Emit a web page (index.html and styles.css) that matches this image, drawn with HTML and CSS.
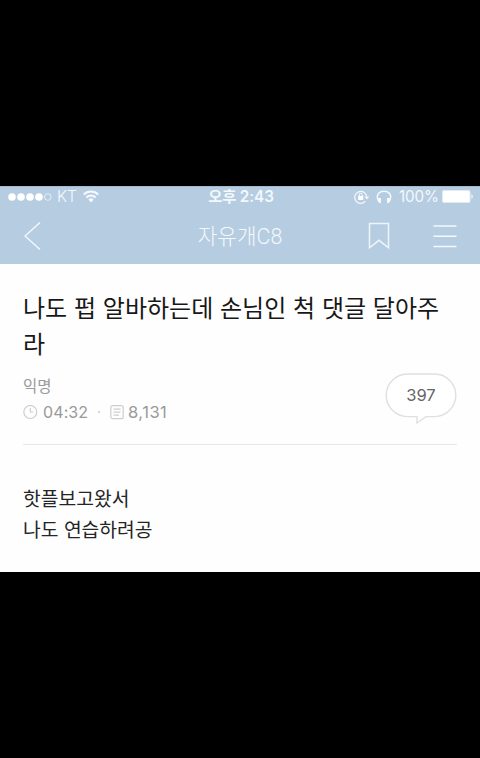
FILE: index.html
```
<!DOCTYPE html>
<html lang="ko">
<head>
<meta charset="utf-8">
<title>자유개C8</title>
<link rel="stylesheet" href="styles.css">
</head>
<body>
<main class="screen">
  <header class="top">
    <div class="status">
      <div class="status-left">
        <svg class="signal" width="44" height="10" viewBox="0 0 44 10"><g fill="#fff"><circle cx="4" cy="5" r="3.8"/><circle cx="13" cy="5" r="3.8"/><circle cx="22" cy="5" r="3.8"/><circle cx="31" cy="5" r="3.8"/></g><circle cx="39.8" cy="5" r="3.3" fill="none" stroke="#e6eff7" stroke-width="1"/></svg>
        <span class="carrier">KT</span>
        <svg class="wifi" width="16" height="13" viewBox="0 0 16 13"><g fill="none" stroke="#f6faff" stroke-width="2"><path d="M.8 4.600a10.200 10.200 0 0 1 14.400 0"/><path d="M3.400 7.500a6.500 6.500 0 0 1 9.200 0"/></g><path d="M5.400 9.600a3.700 3.700 0 0 1 5.200 0L8 12.400z" fill="#f6faff"/></svg>
      </div>
      <span class="time">오후 2:43</span>
      <div class="status-right">
        <svg width="16" height="14" viewBox="0 0 16 14"><path d="M11.4 11.2A6 6 0 1 1 12.7 6.8" fill="none" stroke="#f3f8fd" stroke-width="1.2"/><path d="M10.3 6.5h5l-2.5 3z" fill="#f3f8fd"/><rect x="4.2" y="6" width="5" height="4" fill="#fff"/><path d="M5.2 6V4.8a1.5 1.5 0 0 1 3 0V6" fill="none" stroke="#fff"/></svg>
        <svg class="phones" width="16" height="14" viewBox="0 0 16 14"><path d="M3.3 12C-.8 6.5 2 1.2 8 1.2s8.800 5.300 4.700 10.800" fill="none" stroke="#f6faff" stroke-width="1.4"/><path d="M2.300 8h2.500v5H3.300zM13.700 8h-2.500v5h1.500z" fill="#fff"/></svg>
        <span class="percent">100%</span>
        <svg class="battery" width="32" height="13" viewBox="0 0 32 13"><rect x=".5" y=".5" width="27.500" height="12" rx="1.500" fill="#fff" stroke="#e0ebf5"/><path d="M29.500 4q2.500 2.500 0 5z" fill="#fff"/></svg>
      </div>
    </div>
    <nav class="nav">
      <svg class="back" width="18" height="30" viewBox="0 0 18 30"><path d="M16 1.500L1 15l15 13.500" fill="none" stroke="#f3f8fd" stroke-width="1.500"/></svg>
      <h2 class="board">자유개C8</h2>
      <svg class="bookmark" width="22" height="28" viewBox="0 0 22 28"><path d="M1.500 1.500h19v24.300L11 18.300l-9.500 7.500z" fill="none" stroke="#edf5fc" stroke-width="1.500"/></svg>
      <svg class="menu" width="24" height="24" viewBox="0 0 24 24"><path d="M.5 2h23M.5 12.300h23M.5 22.500h23" stroke="#f3f8fd" stroke-width="1.500"/></svg>
    </nav>
  </header>
  <article class="post">
    <h1 class="title">나도 펍 알바하는데 손님인 척 댓글 달아주<br>라</h1>
    <div class="info">
      <div>
        <div class="author">익명</div>
        <div class="meta">
          <svg width="15" height="15" viewBox="0 0 15 15"><g fill="none" stroke="#cecece" stroke-width="1.200"><circle cx="7.300" cy="7" r="6.500"/><path d="M7.300 3v4h3"/></g></svg>
          <span class="clock">04:32</span>
          <span class="dot"></span>
          <svg width="14" height="15" viewBox="0 0 14 15"><g fill="none" stroke="#cecece" stroke-width="1.200"><rect x=".8" y=".7" width="12.400" height="13" rx="2"/><path d="M3.500 4.200h7M3.500 7.200h7M3.500 10.200h5.500"/></g></svg>
          <span class="views">8,131</span>
        </div>
      </div>
      <div class="comments">
        <svg class="bubble" width="72" height="52" viewBox="0 0 72 52"><path d="M22.500 1h27a21.300 21.300 0 0 1 0 42.600H41L32 50v-6.400h-9.500a21.300 21.300 0 0 1 0-42.600z" fill="#fff" stroke="#e0e0e0" stroke-width="1.400"/></svg>
        <span class="count">397</span>
      </div>
    </div>
    <p class="body">핫플보고왔서<br>나도 연습하려공</p>
  </article>
</main>
</body>
</html>
```
FILE: styles.css
```
* { box-sizing: border-box; }
body {
  margin: 0;
  padding-top: 186px;
  height: 758px;
  background: #000;
  font-family: Inter, "Noto Sans CJK KR", sans-serif;
  overflow: hidden;
}
svg { display: block; flex: none; }
.screen { height: 386px; background: #fefefe; }
.top {
  height: 78px;
  background: #b6cce1;
  border-top: 1px solid #a5b9cf;
  color: #f3f8fd;
}
.status {
  display: grid;
  grid-template-columns: 1fr auto 1fr;
  align-items: center;
  height: 18px;
  padding: 0 6px 0 8px;
  line-height: 18px;
}
.status-left, .status-right { display: flex; align-items: center; }
.status-right { justify-content: flex-end; }
.carrier { margin-left: 5px; width: 21px; font-size: 15.5px; font-weight: 300; }
.wifi { margin-left: 5px; }
.time { padding-top: 1px; font-size: 15.3px; font-weight: 600; letter-spacing: -.1px; }
.phones { margin-left: 6px; }
.percent { margin-left: 7px; width: 39px; padding-top: 1px; font-size: 15.2px; letter-spacing: -.1px; }
.battery { margin-left: 4px; }
.nav {
  display: grid;
  grid-template-columns: 120px 1fr 69px 51px;
  align-items: center;
  height: 59px;
}
.back { margin-left: 24px; margin-top: 3px; }
.board {
  margin: 4px 0 0;
  text-align: center;
  font-family: Roboto, "Noto Sans CJK KR", sans-serif;
  font-size: 21.3px;
  line-height: 28px;
  font-weight: 300;
}
.bookmark { margin-left: 8px; margin-top: 3px; }
.menu { margin-left: 4px; margin-top: 2px; }
.post { padding: 25px 23px 0; }
.title {
  margin: 0;
  font-family: "Noto Sans CJK KR", sans-serif;
  font-size: 24px;
  line-height: 36px;
  font-weight: 400;
  letter-spacing: .02px;
  white-space: nowrap;
  color: #171717;
}
.info {
  display: flex;
  justify-content: space-between;
  height: 84px;
  padding-top: 12px;
  border-bottom: 1px solid #e8e8e8;
}
.author { height: 26px; font-size: 15.5px; line-height: 28px; color: #999; }
.meta { display: flex; align-items: center; height: 26px; color: #999; font-size: 16px; }
.clock { margin-left: 5px; width: 46px; letter-spacing: .1px; }
.dot { width: 2px; height: 2px; margin: 0 10px 0 9px; border-radius: 50%; background: #c8c8c8; }
.views { margin-left: 4px; font-size: 16.5px; letter-spacing: .5px; }
.comments { position: relative; width: 72px; height: 52px; }
.bubble { position: absolute; left: 0; top: 0; }
.count {
  position: relative;
  display: block;
  text-align: center;
  line-height: 45px;
  font-size: 16.5px;
  color: #666;
}
.body {
  margin: 38px 0 0;
  font-family: "Noto Sans CJK KR", sans-serif;
  font-size: 19.3px;
  line-height: 31px;
  color: #252525;
}
```
